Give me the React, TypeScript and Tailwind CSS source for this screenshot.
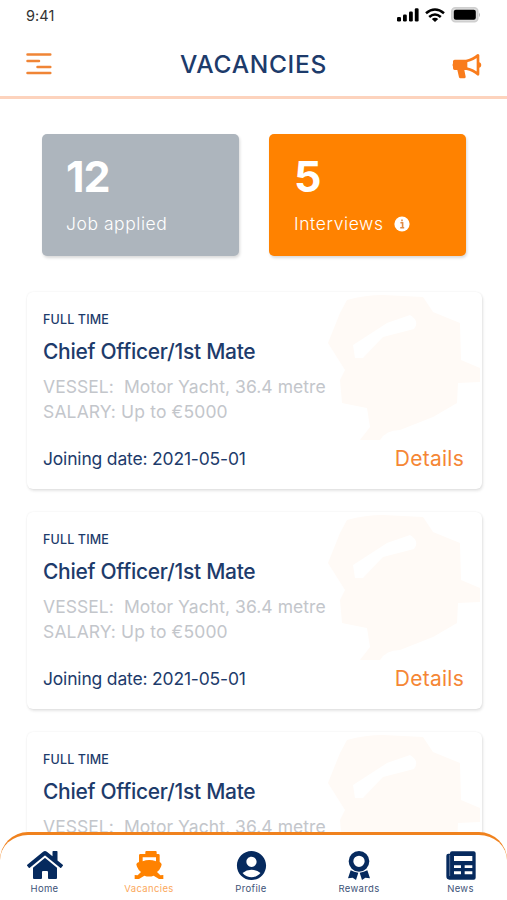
import React from 'react';
import { FaHome } from 'react-icons/fa';
import { MdAccountCircle } from 'react-icons/md';

interface Vacancy {
  id: number;
  type: string;
  title: string;
  vessel: string;
  salary: string;
  joiningDate: string;
}

const vacancies: Vacancy[] = [1, 2, 3].map((id) => ({
  id,
  type: 'FULL TIME',
  title: 'Chief Officer/1st Mate',
  vessel: 'Motor Yacht, 36.4 metre',
  salary: 'Up to €5000',
  joiningDate: '2021-05-01',
}));

const MenuIcon = () => (
  <svg width="26" height="22" viewBox="0 0 26 22" stroke="#f08536" strokeWidth="2.5" strokeLinecap="round">
    <path d="M1.5 1.6H24.3M1.5 7.9H13M11.5 13.9H24.3M1.5 20H24.3" />
  </svg>
);

const MegaphoneIcon = () => (
  <svg className="mt-1" width="30" height="26" viewBox="0 0 90 78" fill="#f97c1c">
    <path d="M8 20H46V51H37L41 71Q41 76 37 76H25Q22 76 21 73L16 51H8Q3 51 3 46V41Q0 36 3 31V25Q3 20 8 20Z" />
    <path d="M44 24Q64 20 78 7V64Q64 51 44 47" fill="none" stroke="#f97c1c" strokeWidth="8" strokeLinejoin="round" />
    <path d="M80 27Q88 29 88 36Q88 43 80 45Z" />
  </svg>
);

const SignalIcon = () => (
  <svg width="22" height="14" viewBox="0 0 22 14">
    <rect x="0" y="9" width="4" height="4.5" rx="1.3" />
    <rect x="6" y="6.5" width="3.8" height="7" rx="1.2" />
    <rect x="12" y="3.5" width="3.8" height="10" rx="1.2" />
    <rect x="17.8" y="0.3" width="3.8" height="13.2" rx="1.2" />
  </svg>
);

const WifiIcon = () => (
  <svg width="20" height="14" viewBox="0 0 20 14" fill="none" stroke="#000" strokeWidth="2.6">
    <path d="M1 5.2Q10-2.2 19 5.2M4.2 9Q10 4 15.8 9" />
    <path d="M6.8 11Q10 8.4 13.2 11L10 14Z" fill="#000" stroke="none" />
  </svg>
);

const BatteryIcon = () => (
  <svg width="30" height="16" viewBox="0 0 30 16">
    <rect x="0.8" y="0.8" width="26" height="14" rx="3.5" fill="#ddd" stroke="#cfcfcf" strokeWidth="1.5" />
    <rect x="2.8" y="2.8" width="22" height="10" rx="2" />
    <path d="M28 5.5Q30 7.8 28 10.2Z" fill="#bbb" />
  </svg>
);

const ShipIcon = () => (
  <svg width="32" height="30" viewBox="0 0 96 90" fill="currentColor">
    <path
      fillRule="evenodd"
      d="M40 3H68Q71 3 71 6V12H76Q80 12 80 16V36L84 39Q88 43 84 50Q80 60 72 66L82 76L91 75V87H78L62 77Q48 82 34 77L18 87H5V75L14 76L24 66Q16 60 12 50Q8 43 12 39L18 36V16Q18 12 22 12H37V6Q37 3 40 3ZM29 22V34Q48 26 69 34V22Z"
    />
  </svg>
);

const RewardIcon = () => (
  <svg width="22" height="29" viewBox="0 0 66 87" fill="currentColor">
    <circle cx="33" cy="31" r="24" fill="none" stroke="currentColor" strokeWidth="14" />
    <path d="M8 58Q18 64 31 65L24 87L14 80L0 82ZM58 58Q48 64 35 65L42 87L52 80L66 82Z" />
  </svg>
);

const NewsIcon = () => (
  <svg width="30" height="29" viewBox="0 0 90 87" fill="currentColor">
    <path
      fillRule="evenodd"
      d="M18 1H83Q89 1 89 7V80Q89 86 83 86H10Q1 86 1 76V14Q1 8 7 8H12V7Q12 1 18 1ZM24 15V30H79V15ZM24 43V51H45V43ZM56 43V51H79V43ZM24 61V70H45V61ZM56 61V70H79V61Z"
    />
    <path d="M11 12V75" stroke="#8c9bb4" strokeWidth="2" />
  </svg>
);

const ShipWatermark = () => (
  <svg className="absolute top-0 right-0" width="154" height="150" viewBox="-2 -2 154 150">
    <path
      fill="#fffaf6"
      fillRule="evenodd"
      d="M10 19L17 6Q35 1 53 1L93 3L103 18L130 29L131 66L150 74V88L128 89L127 109L103 123L70 136Q56 136 50 146H30L40 133L37 114L12 109L10 86L15 76L-2 49ZM23 51L57 29L80 21Q90 27 84 35L53 43L33 64H25Z"
    />
  </svg>
);

// a collapsed card stops after the vessel line, it is the last one above the nav
const VacancyCard: React.FC<{ vacancy: Vacancy; collapsed?: boolean }> = ({ vacancy, collapsed = false }) => (
  <div
    className={`relative shrink-0 bg-white px-4 pt-5 shadow-[1px_2px_3px_rgba(0,0,0,0.1),0_0_2px_rgba(0,0,0,0.08)] ${collapsed ? 'h-[108px] overflow-hidden rounded-t-md' : 'h-[197px] rounded-md'}`}
  >
    <ShipWatermark />
    <div className="relative whitespace-nowrap text-[#1d3b6b]">
      <p className="text-[12.5px] leading-4 font-medium tracking-[0.15px]">{vacancy.type}</p>
      <h2 className="mt-[11px] text-[21px] leading-[26px] font-medium tracking-[-0.28px]">{vacancy.title}</h2>
      <div className="mt-[9px] text-[17.5px] leading-[25px] text-[#c3c6cb]">
        <p className="tracking-[0.06px]">VESSEL:&nbsp; {vacancy.vessel}</p>
        {!collapsed && <p className="tracking-[0.15px]">SALARY: {vacancy.salary}</p>}
      </div>
      {!collapsed && (
        <div className="mt-[23px] flex items-center justify-between leading-6">
          <span className="text-[17.5px] tracking-[-0.18px]">Joining date: {vacancy.joiningDate}</span>
          <a className="mr-0.5 text-[21px] tracking-[0.25px] text-[#f58634]">Details</a>
        </div>
      )}
    </div>
  </div>
);

const navItems = [
  { label: 'Home', icon: <FaHome className="h-9 w-9" />, width: 'w-[89px]' },
  { label: 'Vacancies', icon: <ShipIcon />, width: 'w-[120px]', active: true },
  { label: 'Profile', icon: <MdAccountCircle className="h-[35px] w-[35px]" />, width: 'w-[84px]' },
  { label: 'Rewards', icon: <RewardIcon />, width: 'w-[132px]' },
  { label: 'News', icon: <NewsIcon />, width: 'w-[71px]' },
];

const App: React.FC = () => {
  return (
    <div className="flex h-[900px] w-[507px] flex-col overflow-hidden bg-white font-['Inter',sans-serif]">
      <header className="h-[99px] shrink-0 border-b-[3px] border-[#fdd3bd]">
        <div className="flex h-[30px] items-center justify-between px-[26px]">
          <span className="pt-0.5 text-[14.5px] tracking-[0.1px] text-[#333]">9:41</span>
          <div className="flex items-center gap-[6px]">
            <SignalIcon />
            <WifiIcon />
            <BatteryIcon />
          </div>
        </div>
        <div className="flex h-[67px] items-center justify-between pr-[25px] pl-[26px]">
          <MenuIcon />
          <h1 className="pt-0.5 pl-[3px] text-[24.5px] font-medium tracking-[0.7px] text-[#1d3b6b]">VACANCIES</h1>
          <MegaphoneIcon />
        </div>
      </header>

      <section className="mt-[35px] flex shrink-0 gap-[30px] pl-[42px] text-white">
        <div className="h-[122px] w-[197px] rounded-[5px] bg-[#adb5bd] pt-[22px] pl-6 shadow-[1px_2px_3px_rgba(0,0,0,0.15)]">
          <p className="text-[43px] leading-10 font-bold tracking-[-1px]">12</p>
          <p className="mt-4 text-[17.5px] leading-6 font-light tracking-[0.55px]">Job applied</p>
        </div>
        <div className="h-[122px] w-[197px] rounded-[5px] bg-[#ff8200] pt-[22px] pl-[25px] shadow-[1px_2px_3px_rgba(0,0,0,0.15)]">
          <p className="text-[43px] leading-10 font-bold">5</p>
          <div className="mt-4 flex items-center gap-2.5 text-[17.5px] leading-6 font-light">
            <span className="tracking-[0.6px]">Interviews</span>
            <svg width="16" height="16" viewBox="0 0 16 16">
              <circle cx="8" cy="8" r="7.6" fill="#fff" />
              <path d="M6.4 6.8H8.6V11.5M6.2 11.8H10.2M8 3.4V5.2" stroke="#e08a45" strokeWidth="1.6" fill="none" />
            </svg>
          </div>
        </div>
      </section>

      <main className="flex h-[577px] shrink-0 flex-col gap-[23px] pt-9 pr-[25px] pl-[27px]">
        {vacancies.map((vacancy, index) => (
          <VacancyCard key={vacancy.id} vacancy={vacancy} collapsed={index === vacancies.length - 1} />
        ))}
      </main>

      <nav className="relative -mt-px flex h-[68px] w-full shrink-0 rounded-t-[28px] border-t-[3px] border-[#f0821e] bg-white">
        {navItems.map((item) => (
          <div
            key={item.label}
            className={`flex shrink-0 flex-col items-center pt-[13px] ${item.width} ${item.active ? 'text-[#ff8200]' : 'text-[#062a5e]'}`}
          >
            <div className="flex h-[34px] items-center justify-center">{item.icon}</div>
            <span
              className={`mt-[1px] text-[9.5px] leading-3 tracking-[0.35px] ${item.active ? 'text-[#fba85c]' : 'text-[#3d5378]'}`}
            >
              {item.label}
            </span>
          </div>
        ))}
      </nav>
    </div>
  );
};

export default App;
